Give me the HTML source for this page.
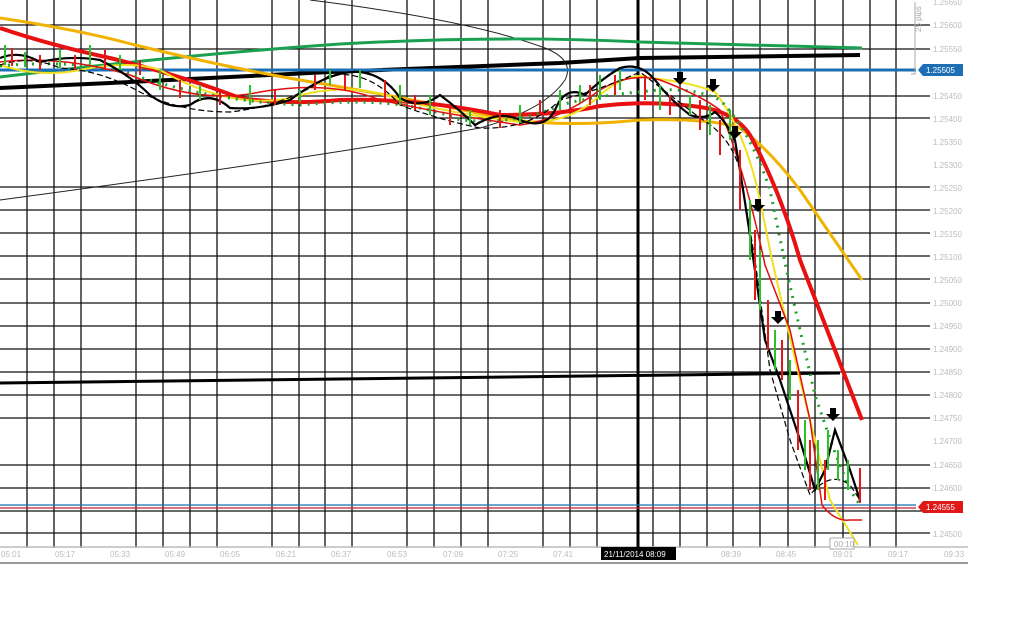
<!DOCTYPE html>
<html><head><meta charset="utf-8"><style>
html,body{margin:0;padding:0;background:#fff;width:1024px;height:640px;overflow:hidden}
svg{display:block}
text{font-family:"Liberation Sans",sans-serif}
</style></head><body>
<svg width="1024" height="640" viewBox="0 0 1024 640" xmlns="http://www.w3.org/2000/svg">
<rect width="1024" height="640" fill="#fff"/>
<g stroke="#111" stroke-width="1.3">
<line x1="27" y1="0" x2="27" y2="548"/><line x1="54" y1="0" x2="54" y2="548"/><line x1="81" y1="0" x2="81" y2="548"/><line x1="136" y1="0" x2="136" y2="548"/><line x1="163" y1="0" x2="163" y2="548"/><line x1="190" y1="0" x2="190" y2="548"/><line x1="217" y1="0" x2="217" y2="548"/><line x1="272" y1="0" x2="272" y2="548"/><line x1="299" y1="0" x2="299" y2="548"/><line x1="325" y1="0" x2="325" y2="548"/><line x1="352" y1="0" x2="352" y2="548"/><line x1="407" y1="0" x2="407" y2="548"/><line x1="434" y1="0" x2="434" y2="548"/><line x1="461" y1="0" x2="461" y2="548"/><line x1="488" y1="0" x2="488" y2="548"/><line x1="543" y1="0" x2="543" y2="548"/><line x1="570" y1="0" x2="570" y2="548"/><line x1="597" y1="0" x2="597" y2="548"/><line x1="653" y1="0" x2="653" y2="548"/><line x1="680" y1="0" x2="680" y2="548"/><line x1="707" y1="0" x2="707" y2="548"/><line x1="733" y1="0" x2="733" y2="548"/><line x1="760" y1="0" x2="760" y2="548"/><line x1="788" y1="0" x2="788" y2="548"/><line x1="815" y1="0" x2="815" y2="548"/><line x1="843" y1="0" x2="843" y2="548"/><line x1="870" y1="0" x2="870" y2="548"/><line x1="896" y1="0" x2="896" y2="548"/>
<line x1="0" y1="25" x2="930" y2="25"/><line x1="0" y1="49" x2="930" y2="49"/><line x1="0" y1="96" x2="930" y2="96"/><line x1="0" y1="118" x2="930" y2="118"/><line x1="0" y1="187" x2="930" y2="187"/><line x1="0" y1="210" x2="930" y2="210"/><line x1="0" y1="233" x2="930" y2="233"/><line x1="0" y1="256" x2="930" y2="256"/><line x1="0" y1="279" x2="930" y2="279"/><line x1="0" y1="303" x2="930" y2="303"/><line x1="0" y1="326" x2="930" y2="326"/><line x1="0" y1="349" x2="930" y2="349"/><line x1="0" y1="372" x2="930" y2="372"/><line x1="0" y1="395" x2="930" y2="395"/><line x1="0" y1="418" x2="930" y2="418"/><line x1="0" y1="465" x2="930" y2="465"/><line x1="0" y1="488" x2="930" y2="488"/><line x1="0" y1="511" x2="930" y2="511"/><line x1="0" y1="533" x2="930" y2="533"/>
</g>
<line x1="0" y1="547" x2="968" y2="547" stroke="#bbb" stroke-width="1.5"/>
<line x1="0" y1="563" x2="968" y2="563" stroke="#777" stroke-width="1.5"/>
<path d="M0,200 Q300,160 480,128 Q545,110 565,80 Q575,60 545,48 Q470,20 310,0" fill="none" stroke="#222" stroke-width="1"/>
<line x1="638" y1="0" x2="638" y2="548" stroke="#000" stroke-width="3"/>
<path d="M0,383 L840,373" stroke="#000" stroke-width="3" fill="none"/>
<path d="M0,77 Q180,55 340,44 Q500,35 640,42 L862,48" stroke="#1aa050" stroke-width="3" fill="none"/>
<path d="M0,88 L110,83 L330,72 L560,63 L640,58 L860,55" stroke="#000" stroke-width="4" fill="none"/>
<line x1="0" y1="70" x2="916" y2="70" stroke="#1c6fb5" stroke-width="3"/>
<line x1="0" y1="505" x2="916" y2="505" stroke="#1c6fb5" stroke-width="1.2"/>
<line x1="0" y1="508" x2="916" y2="508" stroke="#cc2233" stroke-width="1.2"/>
<path d="M0,18 Q80,30 135,45 Q230,68 300,80 Q420,100 500,118 Q560,128 640,120 Q710,118 740,128 Q770,150 800,190 L862,280" stroke="#f2b300" stroke-width="3" fill="none"/>
<path d="M0,28 Q50,45 110,58 Q180,75 240,98 Q290,105 340,100 Q420,98 500,115 Q560,115 600,106 Q650,100 700,107 Q735,112 750,135 Q780,190 800,260 L862,420" stroke="#e81010" stroke-width="4" fill="none"/>
<path d="M0,65 Q40,78 80,70 Q130,60 160,70 Q230,110 290,98 Q350,80 400,100 Q460,115 520,122 Q570,125 600,95 Q630,70 650,78 Q690,82 715,92 Q745,130 760,200 Q768,240 772,260 L800,380 L830,500 L858,545" stroke="#f0e020" stroke-width="2" fill="none"/>
<path d="M0,66 Q60,60 120,70 Q200,100 300,105 Q400,95 460,120 Q520,125 560,105 Q600,95 640,92 Q690,85 720,100 Q750,130 770,190 L785,263 L800,330 L815,395 L832,445 L850,490 L862,508" stroke="#20a030" stroke-width="3" stroke-dasharray="2 6" fill="none"/>
<path d="M0,62 Q60,55 130,75 Q200,105 260,92 Q330,80 380,100 Q450,115 520,125 Q560,120 600,90 Q630,72 660,80 Q700,95 720,110 Q745,170 765,265 L790,330 L810,420 L822,505 Q835,522 850,520 L862,520" stroke="#e01010" stroke-width="1.5" fill="none"/>
<path d="M0,58 Q20,50 40,62 Q70,55 100,60 Q130,75 150,95 Q170,110 190,105 Q210,90 230,108 Q260,110 290,100 Q330,70 360,72 Q385,75 400,98 Q420,110 440,95 Q460,110 475,125 Q500,110 520,120 Q545,130 555,110 Q565,85 585,95 Q600,80 620,68 Q640,62 655,80 Q670,100 690,115 Q705,120 715,112 Q725,120 735,140 Q745,200 752,250 L765,340 L780,380 L800,440 L815,490 L825,470 L835,430 L850,470 L860,500" stroke="#000" stroke-width="2.2" fill="none"/>
<path d="M0,65 Q30,55 60,68 Q100,70 140,92 Q180,112 230,112 Q290,105 330,75 Q370,70 400,105 Q440,120 480,128 Q530,130 560,100 Q600,90 640,72 Q670,95 700,118 Q730,135 740,170 L755,260 L770,370 L790,440 L810,495 Q830,470 850,485 L860,500" stroke="#000" stroke-width="1.2" stroke-dasharray="6 3" fill="none"/>
<g stroke-width="2">
<path d="M5,45v20M25,52v15M60,50v18M90,45v20M120,55v15M160,70v20M200,85v15M250,85v20M300,90v12M330,70v15M360,70v18M400,85v20M430,95v20M470,110v15M520,105v18M560,90v20M580,85v18M600,75v25M620,70v20M660,85v25M690,95v20M710,105v30M730,110v30M750,200v60M760,250v60M775,330v40M790,360v40M805,420v50M818,440v50M828,430v40M838,450v30M848,460v30" stroke="#2cc02c"/>
<path d="M12,48v18M40,55v15M75,55v15M105,50v20M140,60v15M180,80v18M220,90v15M275,90v15M315,75v15M345,75v15M385,80v20M415,95v15M450,105v20M500,110v18M540,100v15M590,85v20M615,75v20M645,75v25M670,95v20M700,100v30M720,120v35M740,150v60M755,230v70M768,300v50M782,340v40M798,390v60M810,440v50M825,460v40M860,468v35" stroke="#e01818"/>
</g>
<g fill="#000">
<path d="M677,72h6v6h4l-7,7-7-7h4z"/>
<path d="M710,79h6v6h4l-7,7-7-7h4z"/>
<path d="M732,126h6v6h4l-7,7-7-7h4z"/>
<path d="M755,199h6v6h4l-7,7-7-7h4z"/>
<path d="M775,311h6v6h4l-7,7-7-7h4z"/>
<path d="M830,408h6v6h4l-7,7-7-7h4z"/>
</g>
<g font-size="8" fill="#bbb">
<text x="933" y="5">1.25650</text><text x="933" y="28">1.25600</text><text x="933" y="52">1.25550</text>
<text x="933" y="99">1.25450</text><text x="933" y="122">1.25400</text><text x="933" y="145">1.25350</text>
<text x="933" y="168">1.25300</text><text x="933" y="191">1.25250</text><text x="933" y="214">1.25200</text>
<text x="933" y="237">1.25150</text><text x="933" y="260">1.25100</text><text x="933" y="283">1.25050</text>
<text x="933" y="306">1.25000</text><text x="933" y="329">1.24950</text><text x="933" y="352">1.24900</text>
<text x="933" y="375">1.24850</text><text x="933" y="398">1.24800</text><text x="933" y="421">1.24750</text>
<text x="933" y="444">1.24700</text><text x="933" y="468">1.24650</text><text x="933" y="491">1.24600</text>
<text x="933" y="537">1.24500</text>
</g>
<path d="M918,70l5,-6h40v12h-40z" fill="#1c6fb5"/>
<text x="926" y="73" font-size="8" fill="#fff">1.25505</text>
<path d="M918,507l5,-6h40v12h-40z" fill="#e01818"/>
<text x="926" y="510" font-size="8" fill="#fff">1.24555</text>
<path d="M915,2v72h-4" stroke="#aaa" fill="none"/>
<text x="0" y="0" font-size="8" fill="#aaa" transform="translate(921,32) rotate(-90)">25 pips</text>
<g font-size="8" fill="#bbb">
<text x="1" y="557">05:01</text><text x="55" y="557">05:17</text><text x="110" y="557">05:33</text><text x="165" y="557">05:49</text><text x="220" y="557">06:05</text><text x="276" y="557">06:21</text><text x="331" y="557">06:37</text><text x="387" y="557">06:53</text><text x="443" y="557">07:09</text><text x="498" y="557">07:25</text><text x="553" y="557">07:41</text><text x="721" y="557">08:39</text><text x="776" y="557">08:45</text><text x="833" y="557">09:01</text><text x="888" y="557">09:17</text><text x="944" y="557">09:33</text>
</g>
<rect x="601" y="547" width="75" height="13" fill="#000"/>
<text x="604" y="557" font-size="8" fill="#fff">21/11/2014 08:09</text>
<rect x="830" y="538" width="24" height="11" fill="#fff" stroke="#aaa"/>
<text x="834" y="547" font-size="8" fill="#aaa">00:10</text>
</svg>
</body></html>
